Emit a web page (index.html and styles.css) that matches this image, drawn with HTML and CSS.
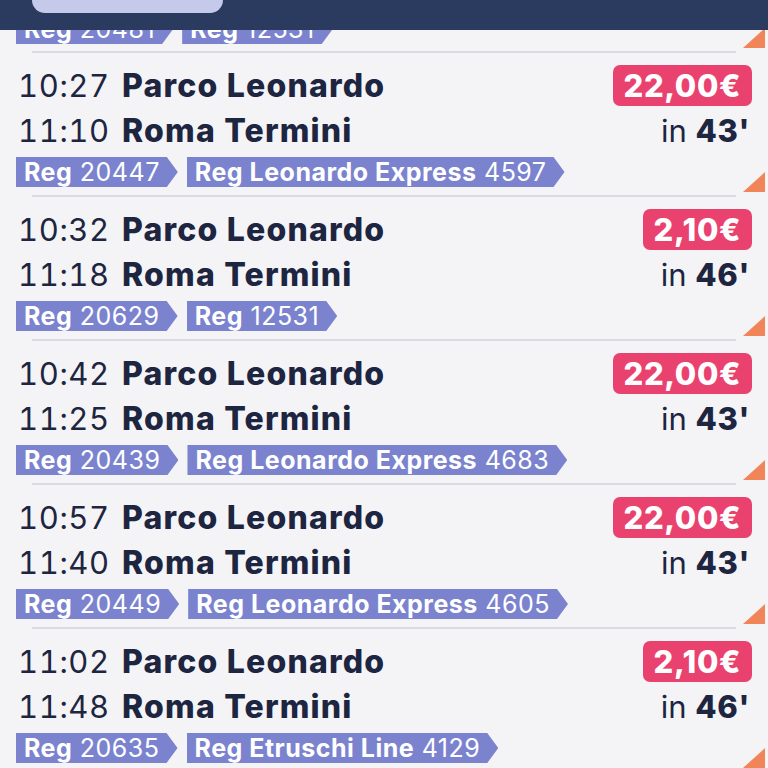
FILE: index.html
```html
<!DOCTYPE html>
<html lang="it">
<head>
    <meta charset="UTF-8">
    <meta name="viewport" content="width=device-width, initial-scale=1.0">
    <title>Parco Leonardo → Roma Termini</title>
    <link rel="stylesheet" href="styles.css">
</head>
<body>
    <header class="topbar">
        <div class="topbar-pill"></div>
    </header>

    <div class="list">
        <!-- riga precedente, tagliata dalla barra -->
        <div class="trip trip-cut">
            <div class="tags">
                <span class="tag"><b>Reg</b> 20481</span>
                <span class="tag"><b>Reg</b> 12531</span>
            </div>
            <span class="corner"></span>
        </div>
        <div class="sep"></div>

        <div class="trip">
            <div class="line">
                <span class="time">10:27</span><span class="station">Parco Leonardo</span>
                <span class="price">22,00€</span>
            </div>
            <div class="line">
                <span class="time">11:10</span><span class="station">Roma Termini</span>
                <span class="dur">in <b>43'</b></span>
            </div>
            <div class="tags">
                <span class="tag"><b>Reg</b> 20447</span>
                <span class="tag"><b>Reg Leonardo Express</b> 4597</span>
            </div>
            <span class="corner"></span>
        </div>
        <div class="sep"></div>

        <div class="trip">
            <div class="line">
                <span class="time">10:32</span><span class="station">Parco Leonardo</span>
                <span class="price">2,10€</span>
            </div>
            <div class="line">
                <span class="time">11:18</span><span class="station">Roma Termini</span>
                <span class="dur">in <b>46'</b></span>
            </div>
            <div class="tags">
                <span class="tag"><b>Reg</b> 20629</span>
                <span class="tag"><b>Reg</b> 12531</span>
            </div>
            <span class="corner"></span>
        </div>
        <div class="sep"></div>

        <div class="trip">
            <div class="line">
                <span class="time">10:42</span><span class="station">Parco Leonardo</span>
                <span class="price">22,00€</span>
            </div>
            <div class="line">
                <span class="time">11:25</span><span class="station">Roma Termini</span>
                <span class="dur">in <b>43'</b></span>
            </div>
            <div class="tags">
                <span class="tag"><b>Reg</b> 20439</span>
                <span class="tag"><b>Reg Leonardo Express</b> 4683</span>
            </div>
            <span class="corner"></span>
        </div>
        <div class="sep"></div>

        <div class="trip">
            <div class="line">
                <span class="time">10:57</span><span class="station">Parco Leonardo</span>
                <span class="price">22,00€</span>
            </div>
            <div class="line">
                <span class="time">11:40</span><span class="station">Roma Termini</span>
                <span class="dur">in <b>43'</b></span>
            </div>
            <div class="tags">
                <span class="tag"><b>Reg</b> 20449</span>
                <span class="tag"><b>Reg Leonardo Express</b> 4605</span>
            </div>
            <span class="corner"></span>
        </div>
        <div class="sep"></div>

        <div class="trip">
            <div class="line">
                <span class="time">11:02</span><span class="station">Parco Leonardo</span>
                <span class="price">2,10€</span>
            </div>
            <div class="line">
                <span class="time">11:48</span><span class="station">Roma Termini</span>
                <span class="dur">in <b>46'</b></span>
            </div>
            <div class="tags">
                <span class="tag"><b>Reg</b> 20635</span>
                <span class="tag"><b>Reg Etruschi Line</b> 4129</span>
            </div>
            <span class="corner"></span>
        </div>
        <div class="sep"></div>
    </div>
</body>
</html>
```

FILE: styles.css
```css
body {
    margin: 0;
    background-color: #f4f4f6; /* sfondo chiaro */
    font-family: Inter, "Noto Sans", sans-serif;
    color: #1d2541;
    overflow: hidden;
}
.topbar {
    height: 30px;
    background-color: #2b3a5f;
    padding-left: 32px;
}
.topbar-pill {
    width: 191px;
    height: 13px;
    background-color: #c5c9ea;
    border-radius: 0 0 14px 14px;
}
.list {
    display: flex;
    flex-direction: column;
}
.trip {
    position: relative;
    padding: 10px 16px 8px 18px;
}
.trip-cut {
    height: 21px;
    padding: 0 16px;
    overflow: hidden;
}
.trip-cut .tags {
    margin-top: -16px;
    margin-left: 0;
}
.line {
    display: flex;
    align-items: center;
    height: 45px;
    font-size: 31px;
    white-space: nowrap;
}
.time {
    width: 104px;
    font-variant-numeric: tabular-nums;
    letter-spacing: 0.6px;
}
.station {
    font-size: 32px;
    font-weight: 800;
    letter-spacing: 1.2px;
    flex: 1;
}
.price {
    height: 41px;
    line-height: 41px;
    padding: 0 11px;
    border-radius: 7px;
    background-color: #e9426f;
    color: #fff;
    font-weight: 800;
    letter-spacing: 0.6px;
}
.dur {
    padding-right: 2px;
}
.dur b {
    font-weight: 800;
    letter-spacing: 0.6px;
}
.tags {
    display: flex;
    gap: 9px;
    margin-top: 4px;
    margin-left: -2px;
}
.tag {
    height: 30px;
    line-height: 30px;
    padding: 0 18px 0 8px;
    font-size: 25px;
    letter-spacing: 0.5px;
    color: #fff;
    background-color: #7b83cf;
    white-space: nowrap;
    clip-path: polygon(0 0, calc(100% - 11px) 0, 100% 50%, calc(100% - 11px) 100%, 0 100%);
}
.tag b {
    font-weight: 700;
}
.corner {
    position: absolute;
    right: 3px;
    bottom: 3px;
    width: 22px;
    height: 20px;
    background-color: #f0855a;
    clip-path: polygon(100% 0, 100% 100%, 0 100%);
}
.sep {
    height: 2px;
    margin: 0 32px;
    background-color: #dcdce0;
}
```
